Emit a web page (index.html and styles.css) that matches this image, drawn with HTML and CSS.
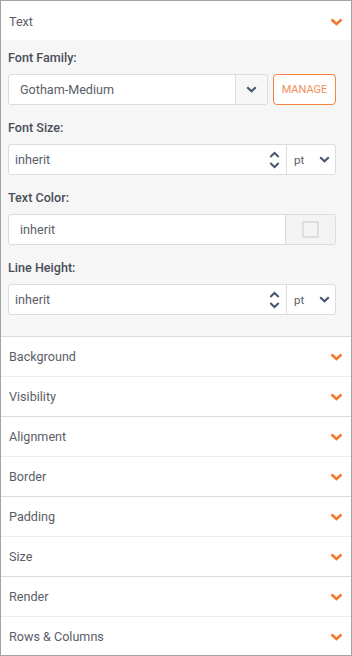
FILE: index.html
```html
<!DOCTYPE html>
<html>
<head>
<meta charset="utf-8">
<link rel="stylesheet" href="styles.css">
</head>
<body>
<div class="panel">
  <div class="section open">
    <div class="head">
      <span>Text</span>
      <svg class="chev" width="13" height="8" viewBox="0 0 13 8"><path d="M1.5 1.5 L6.5 6 L11.5 1.5" fill="none" stroke="#f4772f" stroke-width="2.6"/></svg>
    </div>
    <div class="body">
      <div class="field">
        <div class="label">Font Family:</div>
        <div class="row">
          <div class="select">
            <div class="val pad12">Gotham-Medium</div>
            <div class="drop"><svg width="11" height="7" viewBox="0 0 11 7"><path d="M1.2 1.2 L5.5 5.2 L9.8 1.2" fill="none" stroke="#4a5670" stroke-width="2.2"/></svg></div>
          </div>
          <button class="manage">MANAGE</button>
        </div>
      </div>
      <div class="field">
        <div class="label">Font Size:</div>
        <div class="combo">
          <div class="num">
            <span>inherit</span>
            <svg class="spin" width="11" height="18" viewBox="0 0 11 18"><path d="M1.3 6 L5.5 2 L9.7 6 M1.3 12 L5.5 16 L9.7 12" fill="none" stroke="#4a5670" stroke-width="2"/></svg>
          </div>
          <div class="unit"><span>pt</span><svg width="11" height="7" viewBox="0 0 11 7"><path d="M1.2 1.2 L5.5 5.2 L9.8 1.2" fill="none" stroke="#4a5670" stroke-width="2.2"/></svg></div>
        </div>
      </div>
      <div class="field">
        <div class="label">Text Color:</div>
        <div class="combo">
          <div class="num pad12"><span>inherit</span></div>
          <div class="swatch"><div class="sq"></div></div>
        </div>
      </div>
      <div class="field">
        <div class="label">Line Height:</div>
        <div class="combo">
          <div class="num">
            <span>inherit</span>
            <svg class="spin" width="11" height="18" viewBox="0 0 11 18"><path d="M1.3 6 L5.5 2 L9.7 6 M1.3 12 L5.5 16 L9.7 12" fill="none" stroke="#4a5670" stroke-width="2"/></svg>
          </div>
          <div class="unit"><span>pt</span><svg width="11" height="7" viewBox="0 0 11 7"><path d="M1.2 1.2 L5.5 5.2 L9.8 1.2" fill="none" stroke="#4a5670" stroke-width="2.2"/></svg></div>
        </div>
      </div>
    </div>
  </div>
  <div class="section closed"><div class="head"><span>Background</span><svg class="chev" width="13" height="8" viewBox="0 0 13 8"><path d="M1.5 1.5 L6.5 6 L11.5 1.5" fill="none" stroke="#f4772f" stroke-width="2.6"/></svg></div></div>
  <div class="section closed"><div class="head"><span>Visibility</span><svg class="chev" width="13" height="8" viewBox="0 0 13 8"><path d="M1.5 1.5 L6.5 6 L11.5 1.5" fill="none" stroke="#f4772f" stroke-width="2.6"/></svg></div></div>
  <div class="section closed"><div class="head"><span>Alignment</span><svg class="chev" width="13" height="8" viewBox="0 0 13 8"><path d="M1.5 1.5 L6.5 6 L11.5 1.5" fill="none" stroke="#f4772f" stroke-width="2.6"/></svg></div></div>
  <div class="section closed"><div class="head"><span>Border</span><svg class="chev" width="13" height="8" viewBox="0 0 13 8"><path d="M1.5 1.5 L6.5 6 L11.5 1.5" fill="none" stroke="#f4772f" stroke-width="2.6"/></svg></div></div>
  <div class="section closed"><div class="head"><span>Padding</span><svg class="chev" width="13" height="8" viewBox="0 0 13 8"><path d="M1.5 1.5 L6.5 6 L11.5 1.5" fill="none" stroke="#f4772f" stroke-width="2.6"/></svg></div></div>
  <div class="section closed"><div class="head"><span>Size</span><svg class="chev" width="13" height="8" viewBox="0 0 13 8"><path d="M1.5 1.5 L6.5 6 L11.5 1.5" fill="none" stroke="#f4772f" stroke-width="2.6"/></svg></div></div>
  <div class="section closed"><div class="head"><span>Render</span><svg class="chev" width="13" height="8" viewBox="0 0 13 8"><path d="M1.5 1.5 L6.5 6 L11.5 1.5" fill="none" stroke="#f4772f" stroke-width="2.6"/></svg></div></div>
  <div class="section closed"><div class="head"><span>Rows &amp; Columns</span><svg class="chev" width="13" height="8" viewBox="0 0 13 8"><path d="M1.5 1.5 L6.5 6 L11.5 1.5" fill="none" stroke="#f4772f" stroke-width="2.6"/></svg></div></div>
</div>
</body>
</html>
```
FILE: styles.css
```css
* { box-sizing: border-box; }
html, body { margin: 0; padding: 0; background: #fff; }
body { font-family: Roboto, "Liberation Sans", Arial, sans-serif; font-size: 12.6px; color: #5a5e68; }
.panel {
  width: 352px;
  height: 656px;
  border: 1px solid #a3a3a3;
  overflow: hidden;
  background: #fff;
}
.head {
  height: 39px;
  display: flex;
  align-items: center;
  justify-content: space-between;
  padding: 0 8px 0 8px;
  color: #5a5e68;
}
.open .head { height: 39px; padding-top: 2px; }
.chev { margin-top: 1px; }
.closed { border-top: 1px solid #dcdcdc; }
.closed:nth-child(odd) { border-top-color: #ededed; }
.closed .head { padding-bottom: 1px; }
.body {
  background: #f6f6f6;
  padding: 8px 15px 21px 7px;
}
.field + .field { margin-top: 13px; }
.label {
  font-weight: 500;
  color: #4a4e58;
  height: 20px;
  line-height: 20px;
  margin-bottom: 6px;
}
.row { display: flex; gap: 5px; }
.select {
  flex: 1;
  display: flex;
  height: 31px;
  border: 1px solid #dcdcdc;
  border-radius: 3px;
  background: #fff;
  overflow: hidden;
}
.val { flex: 1; display: flex; align-items: center; color: #5a5e68; }
.pad12 { padding-left: 11px; }
.drop {
  width: 32px;
  border-left: 1px solid #dcdcdc;
  background: #f7f7f7;
  display: flex;
  align-items: center;
  justify-content: center;
}
.manage {
  width: 63px;
  height: 31px;
  border: 1px solid #f4843f;
  border-radius: 4px;
  background: #fff;
  color: #f38e5a;
  font-family: Roboto, "Liberation Sans", Arial, sans-serif;
  font-size: 11px;
  padding: 0;
}
.combo {
  display: flex;
  height: 31px;
  border: 1px solid #dcdcdc;
  border-radius: 3px;
  background: #fff;
  overflow: hidden;
}
.num {
  flex: 1;
  display: flex;
  align-items: center;
  justify-content: space-between;
  padding: 0 6px 0 6px;
  color: #5a5e68;
}
.num.pad12 { padding-left: 11px; }
.spin { margin-top: 1px; }
.unit {
  width: 49px;
  border-left: 1px solid #dcdcdc;
  display: flex;
  align-items: center;
  justify-content: space-between;
  padding: 0 5px 0 7px;
  font-size: 11.5px;
  color: #5a5e68;
}
.swatch {
  width: 50px;
  border-left: 1px solid #dcdcdc;
  background: #f3f3f3;
  display: flex;
  align-items: center;
  justify-content: center;
}
.sq {
  width: 17px;
  height: 17px;
  border: 2px solid #dedede;
  background: #f3f3f3;
}
```
